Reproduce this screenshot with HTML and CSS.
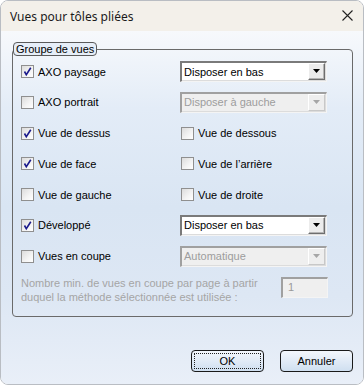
FILE: index.html
```html
<!DOCTYPE html>
<html lang="fr">
<head>
  <meta charset="UTF-8">
  <title>Vues pour tôles pliées</title>
  <link rel="stylesheet" href="styles.css">
</head>
<body>
  <div class="window">
    <div class="titlebar">
      <span class="title">Vues pour tôles pliées</span>
      <svg class="close" width="11" height="11" viewBox="0 0 11 11"><path d="M0.5 0.5 L10.5 10.5 M10.5 0.5 L0.5 10.5" stroke="#222" stroke-width="1.1" fill="none"/></svg>
    </div>
    <div class="content">
      <fieldset class="group">
        <legend>Groupe de vues</legend>
        <div class="rows">
          <label class="check"><span class="box"><svg width="11" height="11" viewBox="0 0 11 11"><path d="M2.5 5.5 L4.3 8.8 L8.8 1.8" stroke="#1a1a8c" stroke-width="1.6" fill="none"/></svg></span>AXO paysage</label>
          <div class="combo"><span class="value">Disposer en bas</span><span class="arrow"><svg width="7" height="4" viewBox="0 0 7 4"><path d="M0 0 H7 L3.5 4 Z" fill="#000"/></svg></span></div>

          <label class="check"><span class="box"></span>AXO portrait</label>
          <div class="combo disabled"><span class="value">Disposer à gauche</span><span class="arrow"><svg width="7" height="4" viewBox="0 0 7 4"><path d="M0 0 H7 L3.5 4 Z" fill="#a6a6a6"/></svg></span></div>

          <label class="check"><span class="box"><svg width="11" height="11" viewBox="0 0 11 11"><path d="M2.5 5.5 L4.3 8.8 L8.8 1.8" stroke="#1a1a8c" stroke-width="1.6" fill="none"/></svg></span>Vue de dessus</label>
          <label class="check right"><span class="box"></span>Vue de dessous</label>

          <label class="check"><span class="box"><svg width="11" height="11" viewBox="0 0 11 11"><path d="M2.5 5.5 L4.3 8.8 L8.8 1.8" stroke="#1a1a8c" stroke-width="1.6" fill="none"/></svg></span>Vue de face</label>
          <label class="check right"><span class="box"></span>Vue de l’arrière</label>

          <label class="check"><span class="box"></span>Vue de gauche</label>
          <label class="check right"><span class="box"></span>Vue de droite</label>

          <label class="check"><span class="box"><svg width="11" height="11" viewBox="0 0 11 11"><path d="M2.5 5.5 L4.3 8.8 L8.8 1.8" stroke="#1a1a8c" stroke-width="1.6" fill="none"/></svg></span>Développé</label>
          <div class="combo"><span class="value">Disposer en bas</span><span class="arrow"><svg width="7" height="4" viewBox="0 0 7 4"><path d="M0 0 H7 L3.5 4 Z" fill="#000"/></svg></span></div>

          <label class="check"><span class="box"></span>Vues en coupe</label>
          <div class="combo disabled"><span class="value">Automatique</span><span class="arrow"><svg width="7" height="4" viewBox="0 0 7 4"><path d="M0 0 H7 L3.5 4 Z" fill="#a6a6a6"/></svg></span></div>
        </div>
        <div class="note-row">
          <p class="note">Nombre min. de vues en coupe par page à partir<br>duquel la méthode sélectionnée est utilisée :</p>
          <div class="field">1</div>
        </div>
      </fieldset>
      <div class="buttons">
        <button class="btn focus"><span>OK</span></button>
        <button class="btn"><span>Annuler</span></button>
      </div>
    </div>
  </div>
</body>
</html>
```

FILE: styles.css
```css
html, body { margin: 0; padding: 0; background: #ffffff; }
body { font-family: "Liberation Sans", Arial, sans-serif; font-size: 11px; color: #000; }

.window { width: 364px; height: 385px; box-sizing: border-box; border: 1px solid #b9bdc3; border-radius: 8px; overflow: hidden; display: flex; flex-direction: column; }

.titlebar { height: 30px; flex: none; background: #f3f0ea; display: flex; align-items: center; justify-content: space-between; padding: 0 10px 0 9px; }
.title { font-family: "Noto Sans", sans-serif; font-size: 12px; color: #1b1b1b; }
.close { display: block; margin-top: -1px; }

.content { flex: 1; display: flex; flex-direction: column; padding: 11px 10px 12px 11px; background: linear-gradient(to bottom, #f7f9fc 0%, #e3ecf7 22%, #d9e5f3 50%, #dde7f4 75%, #e9eff8 100%); }

.group { margin: 0; padding: 5px 24px 12px 8px; border: 1px solid #6a6a6a; border-radius: 4px; }
.group legend { margin-left: -8px; padding: 0 2px 0 2px; border: 1px solid #5a5a5a; border-radius: 4px; background: #e6eef8; line-height: 12px; font-size: 11px; }

.rows { display: grid; grid-template-columns: 159px 147px; grid-auto-rows: 21px; row-gap: 9.8px; }

.check { display: flex; align-items: center; gap: 4px; white-space: nowrap; }
.check.right { padding-left: 1px; }
.box { width: 11px; height: 11px; border: 1px solid #8f8f8f; background: linear-gradient(135deg, #dcdcdc 0%, #f4f4f4 60%, #ffffff 100%); display: flex; align-items: center; justify-content: center; flex: none; }
.box svg { display: block; }

.combo { display: flex; align-items: center; box-sizing: border-box; height: 21px; background: #fff; border-top: 2px solid #7a7a7a; border-left: 2px solid #7a7a7a; border-right: 1px solid #f4f4f4; border-bottom: 1px solid #f4f4f4; box-shadow: inset -1px -1px 0 #dcdcdc; padding: 0 1px 1px 2px; }
.combo .value { flex: 1; }
.combo .arrow { width: 17px; height: 17px; box-sizing: border-box; background: #ececec; border-top: 1px solid #fff; border-left: 1px solid #fff; border-right: 1px solid #6e6e6e; border-bottom: 1px solid #6e6e6e; box-shadow: inset -1px -1px 0 #b4b4b4; display: flex; align-items: center; justify-content: center; padding-bottom: 1px; }
.combo.disabled { background: #efefef; color: #9d9d9d; border-top-color: #a0a0a0; border-left-color: #a0a0a0; }
.combo.disabled .arrow { background: #eeeeee; border-right-color: #c8c8c8; border-bottom-color: #c8c8c8; box-shadow: none; }

.note-row { display: flex; justify-content: space-between; align-items: flex-start; margin-top: 9px; }
.note { margin: 0; color: #a5a5a5; line-height: 14px; }
.field { width: 47px; height: 21px; box-sizing: border-box; margin-top: 1px; background: #efefef; color: #9a9a9a; border-top: 2px solid #a0a0a0; border-left: 2px solid #a0a0a0; border-right: 1px solid #f4f4f4; border-bottom: 1px solid #f4f4f4; padding: 2px 0 0 5px; }

.buttons { margin-top: auto; display: flex; justify-content: flex-end; gap: 16px; }
.btn { width: 73px; height: 22px; padding: 2px; border: 1px solid #1a1a1a; border-radius: 4px; background: linear-gradient(to bottom, #f3f7fc 0%, #e3ecf7 45%, #cfdff0 100%); font-family: "Liberation Sans", Arial, sans-serif; font-size: 11px; color: #000; }
.btn span { display: flex; align-items: center; justify-content: center; height: 100%; box-sizing: border-box; border: 1px dotted transparent; }
.btn.focus span { border-color: #222; }
```
